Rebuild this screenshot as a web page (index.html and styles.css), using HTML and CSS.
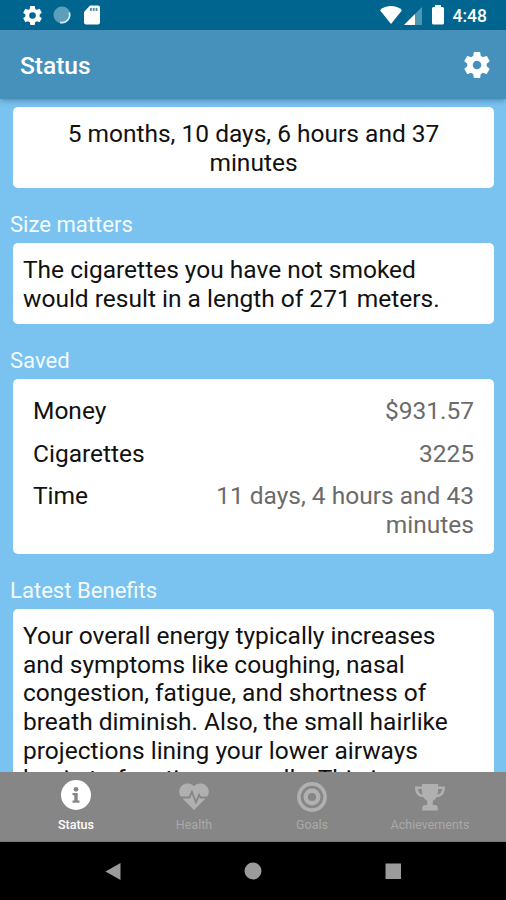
FILE: index.html
```
<!DOCTYPE html>
<html lang="en">
<head>
    <meta charset="UTF-8">
    <meta name="viewport" content="width=device-width, initial-scale=1.0">
    <link rel="stylesheet" href="styles.css">
    <title>Status</title>
</head>
<body>
    <div class="statusbar">
        <svg class="sb-gear" viewBox="2 2 20 20"><path fill="#fff" d="M19.43 12.98c.04-.32.07-.64.07-.98s-.03-.66-.07-.98l2.11-1.65c.19-.15.24-.42.12-.64l-2-3.46c-.12-.22-.39-.3-.61-.22l-2.49 1c-.52-.4-1.08-.73-1.69-.98l-.38-2.65C14.46 2.18 14.25 2 14 2h-4c-.25 0-.46.18-.49.42l-.38 2.65c-.61.25-1.17.59-1.69.98l-2.49-1c-.23-.09-.49 0-.61.22l-2 3.46c-.13.22-.07.49.12.64l2.11 1.65c-.04.32-.07.65-.07.98s.03.66.07.98l-2.11 1.65c-.19.15-.24.42-.12.64l2 3.46c.12.22.39.3.61.22l2.49-1c.52.4 1.08.73 1.69.98l.38 2.65c.03.24.24.42.49.42h4c.25 0 .46-.18.49-.42l.38-2.65c.61-.25 1.17-.59 1.69-.98l2.49 1c.23.09.49 0 .61-.22l2-3.46c.12-.22.07-.49-.12-.64zM12 15.5a3.5 3.5 0 1 1 0-7 3.5 3.5 0 0 1 0 7z"/></svg>
        <svg class="sb-sync" viewBox="0 0 18 18"><circle cx="9" cy="9" r="8.5" fill="#5b9fba"/><path d="M16.200 6.500A7.700 7.700 0 0 1 7 16.400" fill="none" stroke="#d5eaf2" stroke-width="1.700"/></svg>
        <svg class="sb-card" viewBox="0 0 16 20"><path fill="#fff" d="M6 .5h8a2 2 0 0 1 2 2v15a2 2 0 0 1-2 2H2a2 2 0 0 1-2-2V7z"/><path fill="#4c8ba8" d="M6 3h1.800v3H6zM8.800 3h1.800v3H8.800zM11.600 3h1.800v3h-1.800z"/></svg>
        <div class="sb-right">
            <svg class="sb-wifi" viewBox="0 0 22 18"><path fill="#fff" d="M11 18 0 4.200C6-1.400 16-1.400 22 4.200z"/></svg>
            <svg class="sb-signal" viewBox="0 0 18 18"><path fill="#4f97b5" d="M18 0v18H0z"/><path fill="#fff" d="M11 7v11H0z"/></svg>
            <svg class="sb-battery" viewBox="0 0 12 20"><path fill="#fff" d="M3 2V0h6v2h1.500A1.500 1.500 0 0 1 12 3.500v14.500a1.500 1.500 0 0 1-1.500 1.500h-9A1.500 1.500 0 0 1 0 18V3.500A1.500 1.500 0 0 1 1.500 2z"/></svg>
            <span class="clock">4:48</span>
        </div>
    </div>
    <header class="appbar">
        <h1>Status</h1>
        <svg class="settings" viewBox="2 2 20 20"><path fill="#fff" d="M19.43 12.98c.04-.32.07-.64.07-.98s-.03-.66-.07-.98l2.11-1.65c.19-.15.24-.42.12-.64l-2-3.46c-.12-.22-.39-.3-.61-.22l-2.49 1c-.52-.4-1.08-.73-1.69-.98l-.38-2.65C14.46 2.18 14.25 2 14 2h-4c-.25 0-.46.18-.49.42l-.38 2.65c-.61.25-1.17.59-1.69.98l-2.49-1c-.23-.09-.49 0-.61.22l-2 3.46c-.13.22-.07.49.12.64l2.11 1.65c-.04.32-.07.65-.07.98s.03.66.07.98l-2.11 1.65c-.19.15-.24.42-.12.64l2 3.46c.12.22.39.3.61.22l2.49-1c.52.4 1.08.73 1.69.98l.38 2.65c.03.24.24.42.49.42h4c.25 0 .46-.18.49-.42l.38-2.65c.61-.25 1.17-.59 1.69-.98l2.49 1c.23.09.49 0 .61-.22l2-3.46c.12-.22.07-.49-.12-.64zM12 15.300a3.300 3.300 0 1 1 0-6.600 3.300 3.300 0 0 1 0 6.600z"/></svg>
    </header>
    <main class="content">
        <div class="card center">5 months, 10 days, 6 hours and 37<br>minutes</div>
        <h2>Size matters</h2>
        <div class="card">The cigarettes you have not smoked<br>would result in a length of 271 meters.</div>
        <h2>Saved</h2>
        <div class="card saved">
            <div class="row"><span>Money</span><span class="value">$931.57</span></div>
            <div class="row"><span>Cigarettes</span><span class="value">3225</span></div>
            <div class="row"><span>Time</span><span class="value">11 days, 4 hours and 43<br>minutes</span></div>
        </div>
        <h2>Latest Benefits</h2>
        <div class="card">Your overall energy typically increases<br>and symptoms like coughing, nasal<br>congestion, fatigue, and shortness of<br>breath diminish. Also, the small hairlike<br>projections lining your lower airways<br>begin to function normally. This is</div>
    </main>
    <nav class="tabs">
        <div class="tab active">
            <svg viewBox="0 0 30 30"><circle cx="15" cy="15" r="15" fill="#fff"/><circle cx="15" cy="9.300" r="2.400" fill="#868686"/><path fill="#868686" d="M11.500 13h5.200v7.400h1.800v2.300h-7v-2.300h1.800v-5.100h-1.800z"/></svg>
            <span>Status</span>
        </div>
        <div class="tab">
            <svg viewBox="0 0 30 30"><path fill="#b0b0b0" d="M15 4.500C18-.8 29.500.5 29.800 9.500c0 2-.6 3.600-1.500 5H22l-2-3.700-3.100 7.300L13 7.500l-3.300 7H1.700C.8 13.100.2 11.500.2 9.500.5.500 12-.8 15 4.500z"/><path fill="#b0b0b0" d="M3.500 16.500h7.400l2-4.200 4 10.500 3.200-7.700.8 1.400h5.600L15 28z"/></svg>
            <span>Health</span>
        </div>
        <div class="tab">
            <svg viewBox="0 0 30 30"><g fill="none" stroke="#b0b0b0"><circle cx="15" cy="15" r="13.100" stroke-width="3.600"/><circle cx="15" cy="15" r="6.300" stroke-width="4.400"/></g></svg>
            <span>Goals</span>
        </div>
        <div class="tab">
            <svg viewBox="0 0 30 30"><path fill="#b0b0b0" d="M7 2h16v2.500h7C30 11 27.500 15 21.500 15.300c-1 1.700-2.200 2.800-3.700 3.500v4.200h2c2 0 3 1.200 3 3v2.500H7.200V26c0-1.800 1-3 3-3h2v-4.200c-1.500-.7-2.700-1.800-3.700-3.500C2.500 15 0 11 0 4.500h7zM2.800 7c.5 3 2 5 4.700 5.800C7 11 6.800 9 6.800 7zM27.200 7h-4c0 2-.2 4-.7 5.800 2.700-.8 4.200-2.800 4.700-5.800z"/></svg>
            <span>Achievements</span>
        </div>
    </nav>
    <div class="navbar">
        <svg viewBox="0 0 18 18"><path fill="#9b9b9b" d="M16.500 1v17L1.500 9.500z"/></svg>
        <svg viewBox="0 0 18 18"><circle cx="9" cy="9" r="8.500" fill="#9b9b9b"/></svg>
        <svg viewBox="0 0 18 18"><path fill="#9b9b9b" d="M1.500 1.500h15.500v15.500h-15.500z"/></svg>
    </div>
</body>
</html>
```
FILE: styles.css
```
* {
    box-sizing: border-box;
}
body {
    margin: 0;
    height: 900px;
    display: flex;
    flex-direction: column;
    overflow: hidden;
    background-color: #7ac3f0;
    color: #111;
    font-family: Roboto, sans-serif;
}
svg {
    display: block;
    flex: none;
}

/* Android status bar */
.statusbar {
    flex: none;
    height: 30px;
    display: flex;
    align-items: center;
    padding: 0 19px 0 23px;
    background-color: #00668f;
}
.sb-gear {
    width: 19px;
    height: 19px;
}
.sb-sync {
    width: 18px;
    height: 18px;
    margin-left: 11px;
}
.sb-card {
    width: 16px;
    height: 20px;
    margin-left: 13px;
}
.sb-right {
    margin-left: auto;
    display: flex;
    align-items: center;
}
.sb-wifi {
    width: 22px;
    height: 18px;
}
.sb-signal {
    width: 18px;
    height: 18px;
    margin: 1px 0 0 2px;
}
.sb-battery {
    width: 12px;
    height: 20px;
    margin: 0 9px 0 10px;
}
.clock {
    color: #fff;
    font-size: 17.5px;
    font-weight: 500;
    line-height: 30px;
    padding-top: 2px;
}

.appbar {
    flex: none;
    height: 69px;
    display: flex;
    align-items: center;
    justify-content: space-between;
    padding: 0 16px 0 20px;
    background-color: #4591bc;
    box-shadow: 0 1px 6px rgba(50, 80, 120, 0.6);
    z-index: 1;
}
.appbar h1 {
    margin: 2px 0 0;
    color: #fff;
    font-size: 24.5px;
    font-weight: 500;
}
.settings {
    width: 26px;
    height: 26px;
}

.content {
    flex: 1;
    min-height: 0;
    overflow: hidden;
    padding: 8px 12px 0 13px;
}
.content h2 {
    margin: 0 0 0 -3px;
    height: 54.6px;
    padding-top: 22px;
    color: #f4fbff;
    font-size: 22.1px;
    font-weight: 400;
    line-height: 28px;
}
.card {
    padding: 13px 10px 11px;
    border-radius: 5px;
    background-color: #fff;
    font-size: 24.5px;
    line-height: 28.7px;
    white-space: nowrap;
}
.center {
    text-align: center;
}
.saved {
    display: grid;
    row-gap: 13.8px;
    padding: 18px 20px 14.8px;
}
.row {
    display: flex;
    justify-content: space-between;
}
.value {
    color: #6b6b6b;
    text-align: right;
}

.tabs {
    flex: none;
    height: 70px;
    display: flex;
    padding: 0 17px;
    background-color: #868686;
    border-bottom: 1px solid #777;
}
.tab {
    flex: 1;
    display: flex;
    flex-direction: column;
    align-items: center;
    padding-top: 10px;
    color: #a9a9a9;
    font-size: 12.5px;
    line-height: 16px;
}
.tab svg {
    width: 30px;
    height: 30px;
    margin-bottom: 5px;
}
.tab.active {
    padding-top: 8px;
    color: #fff;
    font-weight: 500;
}
.tab.active svg {
    margin-bottom: 7px;
}

.navbar {
    flex: none;
    height: 58px;
    display: flex;
    align-items: center;
    justify-content: space-between;
    padding: 0 104px;
    background-color: #000;
}
.navbar svg {
    width: 18px;
    height: 18px;
}
```
